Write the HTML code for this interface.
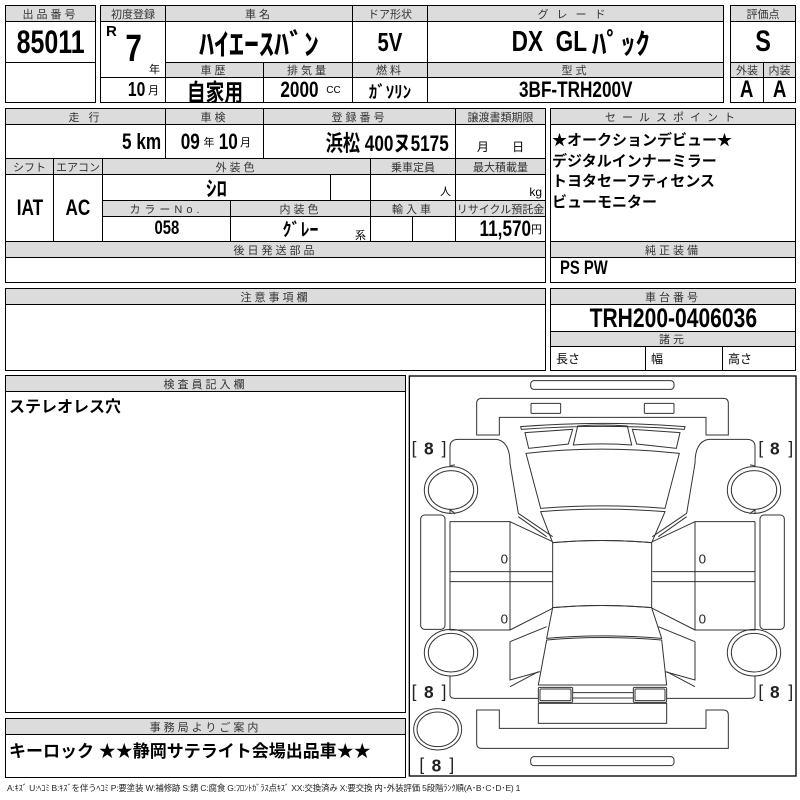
<!DOCTYPE html>
<html><head><meta charset="utf-8">
<style>
body{margin:0;width:800px;height:800px;background:#fff;position:relative;overflow:hidden;font-family:"Liberation Sans","Noto Sans CJK JP",sans-serif;color:#000}
.c{position:absolute;border:1px solid #000;box-sizing:border-box;display:flex;align-items:center;justify-content:center;white-space:nowrap;overflow:hidden}
.h{background:#dcdcdc;font-size:11px;letter-spacing:3px;color:#333}
.v{font-weight:bold;font-size:20px}
.n{display:inline-block;transform:scaleX(.78)}
.r{transform-origin:right center}
.l{transform-origin:left center}
.b{position:absolute;border:1.5px solid #000;box-sizing:border-box}
.t{position:absolute;white-space:nowrap}
</style></head><body>
<!-- box1 -->
<div class="b" style="left:5px;top:5px;width:91px;height:98px"></div>
<div class="c h" style="left:5px;top:5px;width:91px;height:17px">出品番号</div>
<div class="c v" style="left:5px;top:21px;width:91px;height:42px;font-size:32px"><span class="n">85011</span></div>
<!-- box2 -->
<div class="b" style="left:100px;top:5px;width:624px;height:98px"></div>
<div class="c h" style="left:100px;top:5px;width:66px;height:17px;letter-spacing:0">初度登録</div>
<div class="c h" style="left:165px;top:5px;width:188px;height:17px">車名</div>
<div class="c h" style="left:352px;top:5px;width:76px;height:17px;letter-spacing:0">ドア形状</div>
<div class="c h" style="left:427px;top:5px;width:297px;height:17px;letter-spacing:8px">グレード</div>
<div class="c" style="left:100px;top:21px;width:66px;height:57px"></div>
<div class="t v" style="left:106px;top:23px;font-size:15px">R</div>
<div class="t v" style="left:123px;top:28px;font-size:38px"><span class="n">7</span></div>
<div class="t" style="left:149px;top:61px;font-size:11px">年</div>
<div class="c v" style="left:165px;top:21px;width:188px;height:42px;font-size:30px">ﾊｲｴｰｽﾊﾞﾝ</div>
<div class="c v" style="left:352px;top:21px;width:76px;height:42px;font-size:26px"><span class="n">5V</span></div>
<div class="c v" style="left:427px;top:21px;width:297px;height:42px;font-size:29px"><span class="n">DX&nbsp; GL</span><span style="margin-left:-6px">ﾊﾟｯｸ</span></div>
<div class="c h" style="left:165px;top:62px;width:99px;height:16px">車歴</div>
<div class="c h" style="left:263px;top:62px;width:90px;height:16px">排気量</div>
<div class="c h" style="left:352px;top:62px;width:76px;height:16px">燃料</div>
<div class="c h" style="left:427px;top:62px;width:297px;height:16px">型式</div>
<div class="c v" style="left:100px;top:77px;width:66px;height:26px;justify-content:flex-end;padding-right:6px"><span class="n r">10</span><span style="font-size:11px;font-weight:normal;margin-left:3px">月</span></div>
<div class="c v" style="left:165px;top:77px;width:99px;height:26px;font-size:24px"><span class="n">自家用</span></div>
<div class="c v" style="left:263px;top:77px;width:90px;height:26px;font-size:22px"><span class="n">2000</span><span style="font-size:10px;font-weight:normal;margin-left:2px">CC</span></div>
<div class="c v" style="left:352px;top:77px;width:76px;height:26px;font-size:17px">ｶﾞｿﾘﾝ</div>
<div class="c v" style="left:427px;top:77px;width:297px;height:26px;font-size:22px"><span class="n">3BF-TRH200V</span></div>
<!-- box3 -->
<div class="b" style="left:730px;top:5px;width:66px;height:98px"></div>
<div class="c h" style="left:730px;top:5px;width:66px;height:17px;letter-spacing:0">評価点</div>
<div class="c v" style="left:730px;top:21px;width:66px;height:42px;font-size:30px"><span class="n">S</span></div>
<div class="c h" style="left:730px;top:62px;width:34px;height:16px;letter-spacing:0">外装</div>
<div class="c h" style="left:763px;top:62px;width:33px;height:16px;letter-spacing:0">内装</div>
<div class="c v" style="left:730px;top:77px;width:34px;height:26px;font-size:24px"><span class="n">A</span></div>
<div class="c v" style="left:763px;top:77px;width:33px;height:26px;font-size:24px"><span class="n">A</span></div>
<!-- section2 -->
<div class="b" style="left:5px;top:108px;width:541px;height:175px"></div>
<div class="c h" style="left:5px;top:108px;width:161px;height:17px">走 行</div>
<div class="c h" style="left:165px;top:108px;width:99px;height:17px">車検</div>
<div class="c h" style="left:263px;top:108px;width:193px;height:17px">登録番号</div>
<div class="c h" style="left:455px;top:108px;width:91px;height:17px;letter-spacing:0">譲渡書類期限</div>
<div class="c v" style="left:5px;top:124px;width:161px;height:35px;justify-content:flex-end;padding-right:4px;font-size:22px"><span class="n r">5 km</span></div>
<div class="c v" style="left:165px;top:124px;width:99px;height:35px;font-size:22px"><span class="n">09</span><span style="font-size:11px;font-weight:normal;margin:0 1px">年</span><span class="n">10</span><span style="font-size:11px;font-weight:normal">月</span></div>
<div class="c v" style="left:263px;top:124px;width:193px;height:35px;justify-content:flex-end;padding-right:6px;font-size:22px"><span class="n r">浜松 400ヌ5175</span></div>
<div class="c" style="left:455px;top:124px;width:91px;height:35px;font-size:12px;align-items:flex-end;padding-bottom:3px">月&nbsp;&nbsp;&nbsp;&nbsp;&nbsp;&nbsp;&nbsp;日</div>
<div class="c h" style="left:5px;top:158px;width:49px;height:17px;letter-spacing:0">シフト</div>
<div class="c h" style="left:53px;top:158px;width:50px;height:17px;letter-spacing:0">エアコン</div>
<div class="c h" style="left:102px;top:158px;width:269px;height:17px">外装色</div>
<div class="c h" style="left:370px;top:158px;width:86px;height:17px;letter-spacing:0">乗車定員</div>
<div class="c h" style="left:455px;top:158px;width:91px;height:17px;letter-spacing:0">最大積載量</div>
<div class="c v" style="left:5px;top:174px;width:49px;height:68px;font-size:22px"><span class="n">IAT</span></div>
<div class="c v" style="left:53px;top:174px;width:50px;height:68px;font-size:22px"><span class="n">AC</span></div>
<div class="c v" style="left:102px;top:174px;width:229px;height:27px;font-size:21px">ｼﾛ</div>
<div class="c" style="left:330px;top:174px;width:41px;height:27px"></div>
<div class="c" style="left:370px;top:174px;width:86px;height:27px;justify-content:flex-end;align-items:flex-end;font-size:11px;padding:0 4px 1px 0">人</div>
<div class="c" style="left:455px;top:174px;width:91px;height:27px;justify-content:flex-end;align-items:flex-end;font-size:12px;padding:0 3px 1px 0">kg</div>
<div class="c h" style="left:102px;top:200px;width:129px;height:17px;letter-spacing:4px">カラーNo.</div>
<div class="c h" style="left:230px;top:200px;width:141px;height:17px">内装色</div>
<div class="c h" style="left:370px;top:200px;width:86px;height:17px">輸入車</div>
<div class="c h" style="left:455px;top:200px;width:91px;height:17px;letter-spacing:0">リサイクル預託金</div>
<div class="c v" style="left:102px;top:216px;width:129px;height:26px;font-size:19px"><span class="n">058</span></div>
<div class="c v" style="left:230px;top:216px;width:141px;height:26px;font-size:18px">ｸﾞﾚｰ</div>
<div class="t" style="left:355px;top:227px;font-size:11px">系</div>
<div class="c" style="left:370px;top:216px;width:43px;height:26px"></div>
<div class="c" style="left:412px;top:216px;width:44px;height:26px"></div>
<div class="c v" style="left:455px;top:216px;width:91px;height:26px;justify-content:flex-end;padding-right:3px;font-size:22px"><span class="n r">11,570</span><span style="font-size:11px;font-weight:normal">円</span></div>
<div class="c h" style="left:5px;top:241px;width:541px;height:17px">後日発送部品</div>
<!-- sales -->
<div class="b" style="left:550px;top:108px;width:246px;height:175px"></div>
<div class="c h" style="left:550px;top:108px;width:246px;height:17px;letter-spacing:6px">セールスポイント</div>
<div class="t" style="left:552px;top:131px;font-size:15px;font-weight:bold;line-height:20.7px">★オークションデビュー★<br>デジタルインナーミラー<br>トヨタセーフティセンス<br>ビューモニター</div>
<div class="c h" style="left:550px;top:241px;width:246px;height:17px">純正装備</div>
<div class="t v" style="left:560px;top:258px;font-size:19px"><span class="n l">PS PW</span></div>
<!-- section3 -->
<div class="b" style="left:5px;top:288px;width:541px;height:83px"></div>
<div class="c h" style="left:5px;top:288px;width:541px;height:17px">注意事項欄</div>
<div class="b" style="left:550px;top:288px;width:246px;height:83px"></div>
<div class="c h" style="left:550px;top:288px;width:246px;height:17px">車台番号</div>
<div class="c v" style="left:550px;top:304px;width:246px;height:28px;font-size:27px"><span class="n">TRH200-0406036</span></div>
<div class="c h" style="left:550px;top:331px;width:246px;height:16px">諸元</div>
<div class="c" style="left:550px;top:346px;width:96px;height:25px;justify-content:flex-start;padding-left:5px;font-size:12px">長さ</div>
<div class="c" style="left:645px;top:346px;width:78px;height:25px;justify-content:flex-start;padding-left:5px;font-size:12px">幅</div>
<div class="c" style="left:722px;top:346px;width:74px;height:25px;justify-content:flex-start;padding-left:5px;font-size:12px">高さ</div>
<!-- inspector -->
<div class="b" style="left:5px;top:375px;width:401px;height:338px"></div>
<div class="c h" style="left:5px;top:375px;width:401px;height:17px">検査員記入欄</div>
<div class="t" style="left:9px;top:393px;font-size:16px;font-weight:bold">ステレオレス穴</div>
<div class="b" style="left:5px;top:718px;width:401px;height:60px"></div>
<div class="c h" style="left:5px;top:718px;width:401px;height:17px">事務局よりご案内</div>
<div class="t" style="left:9px;top:737px;font-size:17px;font-weight:bold">キーロック ★★静岡サテライト会場出品車★★</div>
<!-- diagram -->
<svg style="position:absolute;left:400px;top:370px" width="400" height="420" viewBox="0 0 1200 1260">
<rect x="28" y="18" width="1160" height="1200" fill="none" stroke="#000" stroke-width="4"/>
<g fill="none" stroke="#333" stroke-width="3">
<rect x="392" y="32" width="430" height="26" rx="10"/>
<rect x="392" y="1160" width="430" height="27" rx="10"/>
<path d="M245,85 H970 Q985,85 985,100 V195 H918 V142 H298 V195 H230 V100 Q230,85 245,85 Z"/>
<path d="M230,1020 H298 V1075 H918 V1020 H970 Q985,1020 985,1035 V1135 H245 Q230,1135 230,1120 Z"/>
<rect x="393" y="100" width="89" height="30" rx="3"/>
<rect x="733" y="100" width="89" height="30" rx="3"/>
<path d="M362,170 Q607,150 855,170 L853,178 Q607,160 364,178 Z"/>
<path d="M375,188 L518,178 L505,222 L386,235 Z"/>
<path d="M840,188 L697,178 L710,222 L829,235 Z"/>
<path d="M533,168 Q607,162 682,168 L695,225 Q607,218 520,225 Z"/>
<path d="M378,250 Q607,225 838,250 L795,415 Q607,400 422,415 Z"/>
<path d="M422,425 Q607,410 795,425 L755,518 Q607,505 458,518 Z"/>
<path d="M458,518 Q607,505 755,518 V713 Q607,700 458,713 Z"/>
<path d="M458,713 Q607,700 755,713 L785,805 Q607,790 440,805 Z"/>
<path d="M440,810 Q607,795 785,810 L800,945 H415 Z"/>
<rect x="415" y="952" width="103" height="45" rx="4"/>
<rect x="420" y="957" width="93" height="35" rx="3"/>
<path d="M518,968 H700 M518,984 H700"/>
<rect x="700" y="952" width="100" height="45" rx="4"/>
<rect x="705" y="957" width="90" height="35" rx="3"/>
<rect x="415" y="1000" width="385" height="60"/>
<g id="L">
<path d="M150,290 V230 Q150,208 175,208 H290 Q330,215 330,280 L355,430 L458,500"/>
<path d="M150,290 Q153,285 165,285 M150,432 V420 Q160,425 165,432"/>
<ellipse cx="153" cy="360" rx="80" ry="70"/>
<ellipse cx="153" cy="360" rx="68" ry="58"/>
<ellipse cx="153" cy="848" rx="80" ry="70"/>
<ellipse cx="153" cy="848" rx="68" ry="58"/>
<rect x="62" y="435" width="73" height="343" rx="12"/>
<path d="M150,455 H330 V605 M150,455 V780 H330 V635"/>
<path d="M150,605 H458 M150,635 H458"/>
<path d="M330,455 L458,515 M330,780 L458,715 M330,605 V635"/>
<path d="M355,440 L440,500"/>
<path d="M330,815 L440,770 M330,815 V930 L420,905"/>
<path d="M150,918 V975 Q150,985 165,985 H415 M330,950 L415,905"/>
</g>
<use href="#L" transform="translate(1215,0) scale(-1,1)"/>
<ellipse cx="113" cy="1078" rx="72" ry="62"/>
<ellipse cx="113" cy="1078" rx="62" ry="52"/>
</g>
<g font-family="Liberation Sans, sans-serif" font-size="52" fill="#222">
<text x="35" y="252">[ </text><text x="72" y="254" font-weight="bold">8</text><text x="125" y="252">]</text>
<text x="1075" y="252">[ </text><text x="1110" y="254" font-weight="bold">8</text><text x="1165" y="252">]</text>
<text x="35" y="982">[ </text><text x="72" y="984" font-weight="bold">8</text><text x="125" y="982">]</text>
<text x="1075" y="982">[ </text><text x="1110" y="984" font-weight="bold">8</text><text x="1165" y="982">]</text>
<text x="58" y="1202">[ </text><text x="95" y="1204" font-weight="bold">8</text><text x="148" y="1202">]</text>
<g font-size="40"><text x="302" y="580">0</text><text x="302" y="760">0</text><text x="896" y="580">0</text><text x="896" y="760">0</text></g>
</g>
</svg>
<div class="t" style="left:7px;top:782px;font-size:8.5px;color:#222;letter-spacing:-0.2px">A:ｷｽﾞ U:ﾍｺﾐ B:ｷｽﾞを伴うﾍｺﾐ P:要塗装 W:補修跡 S:錆 C:腐食 G:ﾌﾛﾝﾄｶﾞﾗｽ点ｷｽﾞ XX:交換済み X:要交換 内･外装評価 5段階ﾗﾝｸ順(A･B･C･D･E) 1</div>
</body></html>
